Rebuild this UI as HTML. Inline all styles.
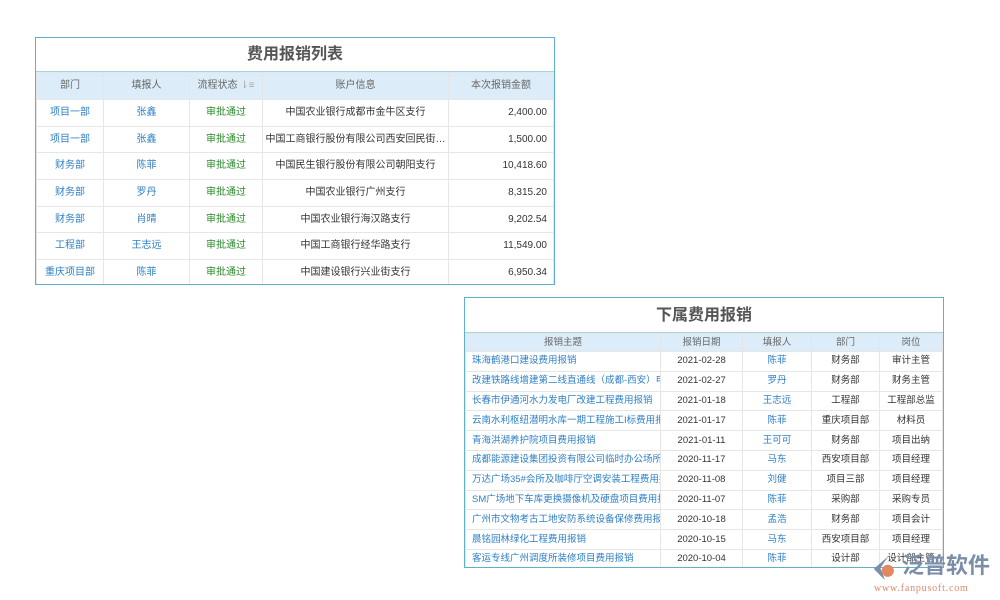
<!DOCTYPE html><html><head><meta charset="utf-8"><style>
*{margin:0;padding:0;box-sizing:border-box}
body{width:1000px;height:600px;background:#fff;font-family:"Liberation Sans","Noto Sans CJK SC",sans-serif;position:relative;overflow:hidden}
.box{position:absolute;border:1px solid #5fb0c8;background:#fff;overflow:hidden}
.t{text-align:center;font-weight:bold;color:#555;border-bottom:1px solid #a8d3e6}
table{border-collapse:collapse;table-layout:fixed;width:100%}
td,th{border:1px solid #e6e6e6;white-space:nowrap;overflow:hidden;text-overflow:clip;text-align:center;font-weight:normal;padding:0;line-height:12px;vertical-align:middle}
th{background:#dcedf9;color:#666}
.b{color:#2f7fc4}.g{color:#2a8a2a}.k{color:#333}
.r{text-align:right;padding-right:6px}
.l{text-align:left;padding-left:6px}
</style></head><body>
<div class="box" style="left:35px;top:37px;width:520px;height:248px">
<div class="t" style="height:34px;line-height:34px;font-size:16px">费用报销列表</div>
<table style="font-size:10px">
<colgroup><col style="width:67px"><col style="width:86px"><col style="width:73px"><col style="width:186px"><col></colgroup>
<tr style="height:27px"><th>部门</th><th>填报人</th><th>流程状态 <span style="color:#aaa">⇂≡</span></th><th>账户信息</th><th>本次报销金额</th></tr>
<tr style="height:26.7px"><td class="b">项目一部</td><td class="b">张鑫</td><td class="g">审批通过</td><td class="k">中国农业银行成都市金牛区支行</td><td class="k r">2,400.00</td></tr>
<tr style="height:26.7px"><td class="b">项目一部</td><td class="b">张鑫</td><td class="g">审批通过</td><td class="k">中国工商银行股份有限公司西安回民街…</td><td class="k r">1,500.00</td></tr>
<tr style="height:26.7px"><td class="b">财务部</td><td class="b">陈菲</td><td class="g">审批通过</td><td class="k">中国民生银行股份有限公司朝阳支行</td><td class="k r">10,418.60</td></tr>
<tr style="height:26.7px"><td class="b">财务部</td><td class="b">罗丹</td><td class="g">审批通过</td><td class="k">中国农业银行广州支行</td><td class="k r">8,315.20</td></tr>
<tr style="height:26.7px"><td class="b">财务部</td><td class="b">肖晴</td><td class="g">审批通过</td><td class="k">中国农业银行海汉路支行</td><td class="k r">9,202.54</td></tr>
<tr style="height:26.7px"><td class="b">工程部</td><td class="b">王志远</td><td class="g">审批通过</td><td class="k">中国工商银行经华路支行</td><td class="k r">11,549.00</td></tr>
<tr style="height:26.7px"><td class="b">重庆项目部</td><td class="b">陈菲</td><td class="g">审批通过</td><td class="k">中国建设银行兴业街支行</td><td class="k r">6,950.34</td></tr>
</table></div>
<div class="box" style="left:464px;top:297px;width:480px;height:271px">
<div class="t" style="height:35px;line-height:35px;font-size:16px">下属费用报销</div>
<table style="font-size:9.5px">
<colgroup><col style="width:195px"><col style="width:82px"><col style="width:69px"><col style="width:68px"><col></colgroup>
<tr style="height:18px"><th>报销主题</th><th>报销日期</th><th>填报人</th><th>部门</th><th>岗位</th></tr>
<tr style="height:19.8px"><td class="b l">珠海鹤港口建设费用报销</td><td class="k">2021-02-28</td><td class="b">陈菲</td><td class="k">财务部</td><td class="k">审计主管</td></tr>
<tr style="height:19.8px"><td class="b l">改建铁路线增建第二线直通线（成都-西安）电力</td><td class="k">2021-02-27</td><td class="b">罗丹</td><td class="k">财务部</td><td class="k">财务主管</td></tr>
<tr style="height:19.8px"><td class="b l">长春市伊通河水力发电厂改建工程费用报销</td><td class="k">2021-01-18</td><td class="b">王志远</td><td class="k">工程部</td><td class="k">工程部总监</td></tr>
<tr style="height:19.8px"><td class="b l">云南水利枢纽潜明水库一期工程施工I标费用报销</td><td class="k">2021-01-17</td><td class="b">陈菲</td><td class="k">重庆项目部</td><td class="k">材料员</td></tr>
<tr style="height:19.8px"><td class="b l">青海洪湖养护院项目费用报销</td><td class="k">2021-01-11</td><td class="b">王可可</td><td class="k">财务部</td><td class="k">项目出纳</td></tr>
<tr style="height:19.8px"><td class="b l">成都能源建设集团投资有限公司临时办公场所装修</td><td class="k">2020-11-17</td><td class="b">马东</td><td class="k">西安项目部</td><td class="k">项目经理</td></tr>
<tr style="height:19.8px"><td class="b l">万达广场35#会所及咖啡厅空调安装工程费用报销</td><td class="k">2020-11-08</td><td class="b">刘健</td><td class="k">项目三部</td><td class="k">项目经理</td></tr>
<tr style="height:19.8px"><td class="b l">SM广场地下车库更换摄像机及硬盘项目费用报销</td><td class="k">2020-11-07</td><td class="b">陈菲</td><td class="k">采购部</td><td class="k">采购专员</td></tr>
<tr style="height:19.8px"><td class="b l">广州市文物考古工地安防系统设备保修费用报销</td><td class="k">2020-10-18</td><td class="b">孟浩</td><td class="k">财务部</td><td class="k">项目会计</td></tr>
<tr style="height:19.8px"><td class="b l">晨铭园林绿化工程费用报销</td><td class="k">2020-10-15</td><td class="b">马东</td><td class="k">西安项目部</td><td class="k">项目经理</td></tr>
<tr style="height:19.8px"><td class="b l">客运专线广州调度所装修项目费用报销</td><td class="k">2020-10-04</td><td class="b">陈菲</td><td class="k">设计部</td><td class="k">设计部主管</td></tr>
</table></div>
<div style="position:absolute;left:866px;top:551px;width:134px;height:47px;white-space:nowrap">
<svg width="30" height="28" style="position:absolute;left:4px;top:3px" viewBox="0 0 32 30"><path d="M20 2 L4 16 L16 28 L11 15 Z" fill="#7a8ea8"/><circle cx="19" cy="18" r="6.5" fill="#e08a60"/></svg>
<div style="position:absolute;left:36px;top:1px;font-size:22px;line-height:28px;color:#7a8ea8;font-weight:bold">泛普软件</div>
<div style="position:absolute;left:8px;top:32px;font-size:10px;line-height:12px;color:#e0896a;font-family:'Liberation Serif',serif;letter-spacing:0.8px">www.fanpusoft.com</div>
</div>
</body></html>
